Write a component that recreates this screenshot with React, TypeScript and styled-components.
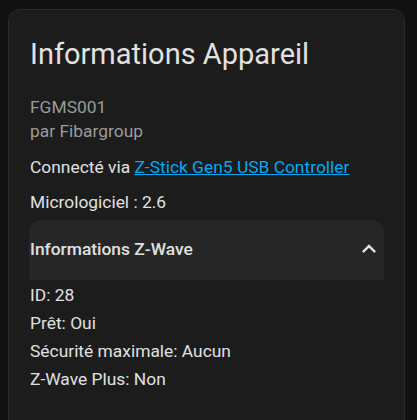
import styled, { createGlobalStyle } from "styled-components";

const GlobalStyle = createGlobalStyle`
  body {
    margin: 0;
    background-color: #111111;
    font-family: Roboto, "Noto Sans", sans-serif;
    color: #e1e1e1;
  }
`;

const Page = styled.div`
  padding: 9px 0 0 8px;
  height: 420px;
  box-sizing: border-box;
  overflow: hidden;
`;

const Card = styled.div`
  width: 397px;
  min-height: 440px;
  box-sizing: border-box;
  background-color: #1c1c1c;
  border: 1px solid #2c2c2c;
  border-radius: 12px;
  padding: 0 20px 16px 20px;
`;

const Title = styled.h1`
  margin: 0;
  padding: 24px 0 0 1px;
  font-size: 29px;
  font-weight: 400;
  line-height: 40px;
  color: #e1e1e1;
`;

const Model = styled.div`
  margin-top: 21px;
  font-size: 17.4px;
  line-height: 24px;
  color: #9b9b9b;
  padding-left: 1px;
`;

const Line = styled.div<{ $gap: number }>`
  margin-top: ${(p) => p.$gap}px;
  font-size: 17.4px;
  line-height: 24px;
  padding-left: 1px;
`;

const Link = styled.a`
  color: #03a9f4;
  text-decoration: underline;
`;

const Panel = styled.div`
  margin-top: 6px;
`;

const PanelHeader = styled.div`
  height: 60px;
  display: flex;
  align-items: center;
  justify-content: space-between;
  background-color: #262626;
  border-radius: 12px 12px 0 0;
  padding: 0 1px 0 1px;
`;

const PanelTitle = styled.span`
  font-size: 17.4px;
  font-weight: 500;
  color: #e1e1e1;
  margin-top: -2px;
`;

const PanelBody = styled.div`
  padding: 1px 0 0 1px;
`;

const InfoRow = styled.div`
  font-size: 17.4px;
  line-height: 28px;
`;

const Chevron = () => (
  <svg width="28" height="28" viewBox="0 0 24 24" style={{ marginTop: -2 }}>
    <path fill="#e1e1e1" d="M7.41,15.41L12,10.83L16.59,15.41L18,14L12,8L6,14L7.41,15.41Z" />
  </svg>
);

const App = () => {
  return (
    <Page>
      <GlobalStyle />
      <Card>
        <Title>Informations Appareil</Title>
        <Model>
          FGMS001
          <br />
          par Fibargroup
        </Model>
        <Line $gap={12}>
          Connecté via <Link href="#">Z-Stick Gen5 USB Controller</Link>
        </Line>
        <Line $gap={11}>Micrologiciel : 2.6</Line>
        <Panel>
          <PanelHeader>
            <PanelTitle>Informations Z-Wave</PanelTitle>
            <Chevron />
          </PanelHeader>
          <PanelBody>
            <InfoRow>ID: 28</InfoRow>
            <InfoRow>Prêt: Oui</InfoRow>
            <InfoRow>Sécurité maximale: Aucun</InfoRow>
            <InfoRow>Z-Wave Plus: Non</InfoRow>
          </PanelBody>
        </Panel>
      </Card>
    </Page>
  );
};

export default App;
